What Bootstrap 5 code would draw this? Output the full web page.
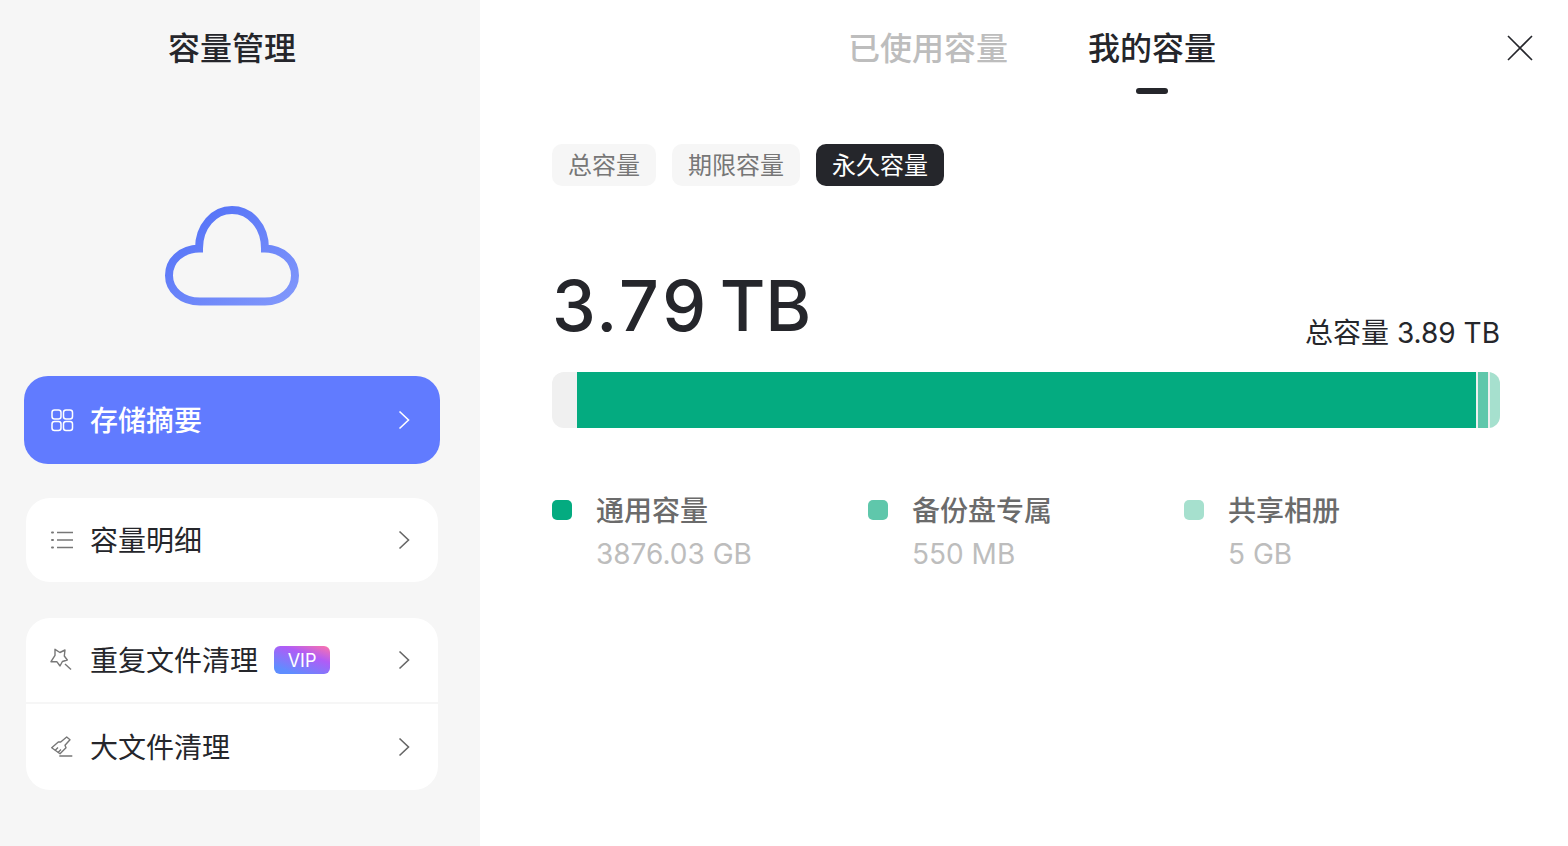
<!DOCTYPE html>
<html lang="zh-CN">

<head>
    <meta charset="UTF-8">
    <meta name="viewport" content="width=device-width, initial-scale=1.0">
    <title>容量管理</title>
    <link href="https://cdn.jsdelivr.net/npm/bootstrap@5.3.0/dist/css/bootstrap.min.css" rel="stylesheet">
    <style>
        body {
            font-family: Inter, "Noto Sans CJK SC", sans-serif;
            color: #25262b;
            overflow: hidden;
        }

        .app-shell {
            height: 846px;
        }

        .side-panel {
            width: 480px;
            background: #f6f6f6;
            padding: 25px 40px 0 24px;
        }

        .panel-title {
            font-size: 32px;
            line-height: 48px;
            font-weight: 500;
            margin: 0;
        }

        .cloud-wrap {
            margin: 132px 0 68px;
            height: 103px;
        }

        .menu-card {
            background: #fff;
            border-radius: 24px;
            margin: 0 2px 36px;
        }

        .menu-row {
            height: 84px;
            padding: 0 26px 0 24px;
            font-size: 28px;
            color: #25262b;
        }

        .menu-row+.menu-row {
            border-top: 2px solid #f6f6f6;
            height: 88px;
        }

        .menu-active {
            background: #617bff;
            color: #fff;
            border-radius: 24px;
            height: 88px;
            padding: 0 28px 0 26px;
            margin-bottom: 34px;
            font-size: 28px;
            font-weight: 500;
        }

        .row-label {
            padding-top: 2px;
        }

        .row-icon {
            width: 24px;
            height: 24px;
            margin-right: 16px;
            flex: none;
        }

        .row-chevron {
            width: 16px;
            height: 22px;
            margin-left: auto;
        }

        .vip-tag {
            width: 56px;
            height: 28px;
            margin-left: 16px;
            border-radius: 6px;
            font-size: 18px;
            line-height: 29px;
            text-align: center;
            color: #fff;
            background: linear-gradient(20deg, #5f8dff 15%, #b05cf6 65%, #ff74a8 100%);
        }

        .main-panel {
            padding: 25px 68px 0 72px;
        }

        .tab-row {
            gap: 80px;
            height: 69px;
            padding-left: 298px;
            margin-left: -2px;
        }

        .tab-item {
            font-size: 32px;
            line-height: 48px;
            font-weight: 500;
            color: #bdbdbd;
            position: relative;
        }

        .tab-on {
            color: #25262b;
        }

        .tab-on::after {
            content: "";
            position: absolute;
            left: 48px;
            top: 63px;
            width: 32px;
            height: 6px;
            border-radius: 3px;
            background: #25262b;
        }

        .close-btn {
            position: absolute;
            top: 35px;
            right: 35px;
            width: 26px;
            height: 26px;
        }

        .pill-row {
            margin-top: 50px;
            gap: 16px;
        }

        .range-pill {
            height: 42px;
            padding: 0 16px;
            border-radius: 10px;
            background: #f6f6f6;
            color: #777;
            font-size: 24px;
            line-height: 44px;
        }

        .range-on {
            background: #25262b;
            color: #fff;
        }

        .usage-head {
            margin-top: 76px;
            height: 110px;
        }

        .usage-num {
            font-size: 70px;
            line-height: 92px;
            font-weight: 500;
            font-variant-numeric: tabular-nums;
            word-spacing: -6px;
            margin-bottom: 20px;
        }

        .usage-total {
            font-size: 28px;
            line-height: 42px;
            margin-bottom: 18px;
        }

        .usage-bar {
            height: 56px;
            border-radius: 12px;
            overflow: hidden;
            background: #f0f0f0;
            gap: 2px;
        }

        .bar-rest {
            width: 25px;
            margin-right: -2px;
        }

        .legend-row {
            margin-top: 60px;
        }

        .legend-item {
            width: 316px;
            gap: 24px;
        }

        .legend-dot {
            width: 20px;
            height: 20px;
            border-radius: 5px;
            margin-top: 12px;
            flex: none;
        }

        .legend-name {
            font-size: 28px;
            line-height: 44px;
            font-weight: 500;
            color: #6b6b6b;
            padding-top: 1px;
        }

        .legend-val {
            font-size: 28px;
            line-height: 43px;
            color: #bdbdbd;
        }
    </style>
</head>

<body>
    <div class="app-shell d-flex position-relative">
        <!-- left menu -->
        <div class="side-panel flex-shrink-0">
            <h1 class="panel-title text-center">容量管理</h1>
            <div class="cloud-wrap d-flex justify-content-center">
                <svg width="136" height="103" viewBox="0 0 136 103" fill="none">
                    <defs>
                        <linearGradient id="cloudGrad" x1="0" y1="0" x2="1" y2="1">
                            <stop offset="0" stop-color="#4f6ef7" />
                            <stop offset="1" stop-color="#8298fb" />
                        </linearGradient>
                    </defs>
                    <path d="M36 96.500H101C118 96.500 131 85 131 70.500C131 55 118 44 101 43.500C101 21 86 5 68 5C50 5 35 21 35 43.500C18 44 5 55 5 70.500C5 85 18 96.500 36 96.500Z" stroke="url(#cloudGrad)" stroke-width="8" stroke-linejoin="miter" />
                </svg>
            </div>

            <div class="menu-active d-flex align-items-center">
                <svg class="row-icon" viewBox="0 0 24 24" fill="none" stroke="#fff" stroke-width="1.500">
                    <rect x="2" y="2" width="9" height="9" rx="2.500" />
                    <rect x="13.500" y="2" width="9" height="9" rx="2.500" />
                    <rect x="2" y="13.500" width="9" height="9" rx="2.500" />
                    <rect x="13.500" y="13.500" width="9" height="9" rx="2.500" />
                </svg>
                <span class="row-label">存储摘要</span>
                <svg class="row-chevron" viewBox="0 0 16 22" fill="none" stroke="#fff" stroke-width="1.600">
                    <path d="M3.500 2.500L12.500 11L3.500 19.500" />
                </svg>
            </div>

            <div class="menu-card">
                <div class="menu-row d-flex align-items-center">
                    <svg class="row-icon" viewBox="0 0 24 24" fill="none" stroke="#777" stroke-width="1.400">
                        <path d="M7 4.500H23M7 12H23M7 19.500H23" />
                        <path d="M2 4.500H3M2 12H3M2 19.500H3" stroke-linecap="round" stroke-width="2" />
                    </svg>
                    <span class="row-label">容量明细</span>
                    <svg class="row-chevron" viewBox="0 0 16 22" fill="none" stroke="#666" stroke-width="1.600">
                        <path d="M3.500 2.500L12.500 11L3.500 19.500" />
                    </svg>
                </div>
            </div>

            <div class="menu-card">
                <div class="menu-row d-flex align-items-center">
                    <svg class="row-icon" viewBox="0 0 24 24" fill="none" stroke="#777" stroke-width="1.400" stroke-linejoin="round">
                        <path d="M5 1.300L9.900 4.500L15 2L14.300 8L17.300 12L12.400 13.500L10 18L7 13.800L1 13.700L5 7.300Z" />
                        <path d="M15 16L21 21.500" />
                    </svg>
                    <span class="row-label">重复文件清理</span>
                    <span class="vip-tag">VIP</span>
                    <svg class="row-chevron" viewBox="0 0 16 22" fill="none" stroke="#666" stroke-width="1.600">
                        <path d="M3.500 2.500L12.500 11L3.500 19.500" />
                    </svg>
                </div>
                <div class="menu-row d-flex align-items-center">
                    <svg class="row-icon" viewBox="0 0 24 24" fill="none" stroke="#777" stroke-width="1.400" stroke-linejoin="round">
                        <path d="M10.700 7L16.700 2L20 4.700L15 10.300L16 12.700L10 18.700L1.700 12.700L8.300 7Z" />
                        <path d="M5 15.500L8 12.500M8 17.500L11 14.500M9.300 21H22.300" />
                    </svg>
                    <span class="row-label">大文件清理</span>
                    <svg class="row-chevron" viewBox="0 0 16 22" fill="none" stroke="#666" stroke-width="1.600">
                        <path d="M3.500 2.500L12.500 11L3.500 19.500" />
                    </svg>
                </div>
            </div>
        </div>

        <!-- right content -->
        <div class="main-panel flex-grow-1">
            <div class="tab-row d-flex">
                <div class="tab-item">已使用容量</div>
                <div class="tab-item tab-on">我的容量</div>
            </div>
            <svg class="close-btn" viewBox="0 0 26 26" fill="none" stroke="#25262b" stroke-width="1.600">
                <path d="M1 1L25 25M25 1L1 25" />
            </svg>

            <div class="pill-row d-flex">
                <div class="range-pill">总容量</div>
                <div class="range-pill">期限容量</div>
                <div class="range-pill range-on">永久容量</div>
            </div>

            <div class="usage-head d-flex justify-content-between align-items-end">
                <div class="usage-num">3.79 TB</div>
                <div class="usage-total">总容量 3.89 TB</div>
            </div>

            <div class="usage-bar d-flex">
                <div class="bar-rest"></div>
                <div style="width: 899px; background: #04ab80;"></div>
                <div style="width: 10px; background: #5fc7ab;"></div>
                <div style="width: 10px; background: #a6e0ce;"></div>
            </div>

            <div class="legend-row d-flex">
                <div class="legend-item d-flex">
                    <div class="legend-dot" style="background: #04ab80;"></div>
                    <div>
                        <div class="legend-name">通用容量</div>
                        <div class="legend-val">3876.03 GB</div>
                    </div>
                </div>
                <div class="legend-item d-flex">
                    <div class="legend-dot" style="background: #5fc7ab;"></div>
                    <div>
                        <div class="legend-name">备份盘专属</div>
                        <div class="legend-val">550 MB</div>
                    </div>
                </div>
                <div class="legend-item d-flex">
                    <div class="legend-dot" style="background: #a6e0ce;"></div>
                    <div>
                        <div class="legend-name">共享相册</div>
                        <div class="legend-val">5 GB</div>
                    </div>
                </div>
            </div>
        </div>
    </div>
    <script src="https://cdn.jsdelivr.net/npm/bootstrap@5.3.0/dist/js/bootstrap.bundle.min.js"></script>
</body>

</html>
